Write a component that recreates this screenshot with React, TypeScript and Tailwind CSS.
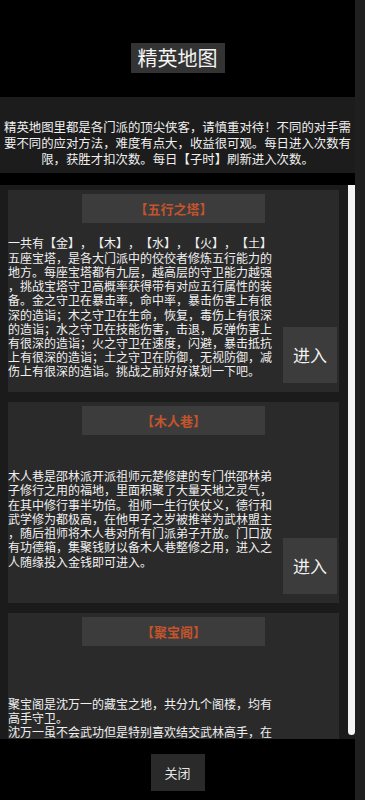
const cjk = { fontFamily: '"Noto Sans CJK SC", "Noto Sans", sans-serif' };

const intro = [
  "精英地图里都是各门派的顶尖侠客，请慎重对待！不同的对手需",
  "要不同的应对方法，难度有点大，收益很可观。每日进入次数有",
  "限，获胜才扣次数。每日【子时】刷新进入次数。",
];

const maps = [
  {
    name: "【五行之塔】",
    height: "h-[202px]",
    top: "justify-center",
    lines: [
      "一共有【金】，【木】，【水】，【火】，【土】",
      "五座宝塔，是各大门派中的佼佼者修炼五行能力的",
      "地方。每座宝塔都有九层，越高层的守卫能力越强",
      "，挑战宝塔守卫高概率获得带有对应五行属性的装",
      "备。金之守卫在暴击率，命中率，暴击伤害上有很",
      "深的造诣；木之守卫在生命，恢复，毒伤上有很深",
      "的造诣；水之守卫在技能伤害，击退，反弹伤害上",
      "有很深的造诣；火之守卫在速度，闪避，暴击抵抗",
      "上有很深的造诣；土之守卫在防御，无视防御，减",
      "伤上有很深的造诣。挑战之前好好谋划一下吧。",
    ],
  },
  {
    name: "【木人巷】",
    height: "h-[201px]",
    top: "justify-center",
    lines: [
      "木人巷是邵林派开派祖师元楚修建的专门供邵林弟",
      "子修行之用的福地，里面积聚了大量天地之灵气，",
      "在其中修行事半功倍。祖师一生行侠仗义，德行和",
      "武学修为都极高，在他甲子之岁被推举为武林盟主",
      "，随后祖师将木人巷对所有门派弟子开放。门口放",
      "有功德箱，集聚钱财以备木人巷整修之用，进入之",
      "人随缘投入金钱即可进入。",
    ],
  },
  {
    name: "【聚宝阁】",
    height: "h-[200px]",
    top: "justify-start pt-[51px]",
    lines: [
      "聚宝阁是沈万一的藏宝之地，共分九个阁楼，均有",
      "高手守卫。",
      "沈万一虽不会武功但是特别喜欢结交武林高手，在",
    ],
  },
];

const MapCard = ({
  name,
  height,
  top,
  lines,
}: {
  name: string;
  height: string;
  top: string;
  lines: string[];
}) => (
  <div className={`${height} shrink-0 bg-[#2a2a2a] flex flex-col`}>
    <div className="mt-1 mx-auto w-[183px] h-[29px] bg-[#3c3c3c] flex items-center justify-center">
      <span className="text-[13px] font-semibold text-[#c4542d] [text-spacing-trim:space-all]">{name}</span>
    </div>
    <div className="flex-1 flex">
      <div
        className={`w-[266px] flex flex-col ${top} text-[12px] leading-[14.2px] text-[#f0f0f0] [text-spacing-trim:space-all]`}
      >
        {lines.map((l) => (
          <div key={l} className="whitespace-nowrap">
            {l}
          </div>
        ))}
      </div>
      <div className="flex-1 flex items-end justify-end pr-[2px] pb-[9px]">
        <button className="w-[54px] h-[56px] bg-[#3c3c3c] text-[17px] text-[#f2f2f2] flex items-center justify-center">
          进入
        </button>
      </div>
    </div>
  </div>
);

export default function App() {
  return (
    <div className="w-[365px] h-[800px] flex bg-black overflow-hidden" style={cjk}>
      <div className="w-[355px] flex flex-col">
        {/* header */}
        <div className="h-[97px] shrink-0 flex items-start justify-center pt-[43px]">
          <div className="h-[30px] px-[7px] bg-[#333333] flex items-center text-[20px] text-[#f4f4f4]">
            精英地图
          </div>
        </div>

        {/* intro */}
        <div className="h-[76px] shrink-0 bg-[#1c1c1c] pt-[22px] flex flex-col items-center text-[12.4px] leading-[16px] text-[#f0f0f0] [text-spacing-trim:space-all]">
          {intro.map((l) => (
            <div key={l} className="whitespace-nowrap">
              {l}
            </div>
          ))}
        </div>

        <div className="h-[12px] shrink-0" />

        {/* list */}
        <div className="h-[554px] shrink-0 bg-[#1b1b1b] flex overflow-hidden">
          <div className="w-[339px] pl-2 pt-[5px] flex flex-col gap-[10px]">
            {maps.map((m) => (
              <MapCard key={m.name} {...m} />
            ))}
          </div>
          <div className="flex-1" />
          <div className="w-[7px] h-[550px] bg-[#f4f4f4] rounded-b-sm" />
        </div>

        {/* footer */}
        <div className="flex-1 flex items-start justify-center pt-[15px]">
          <button className="w-[54px] h-[37px] bg-[#2a2a2a] text-[13px] text-[#e6e6e6]">关闭</button>
        </div>
      </div>
      <div className="flex-1 bg-[#1f1f1f]" />
    </div>
  );
}
